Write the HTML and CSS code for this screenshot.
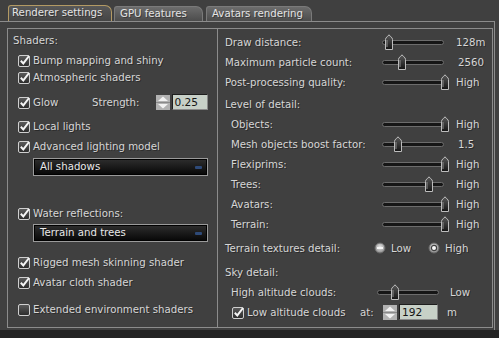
FILE: index.html
```html
<!DOCTYPE html>
<html lang="en">
<head>
    <meta charset="UTF-8">
    <title>Graphics preferences</title>
    <link rel="stylesheet" href="styles.css">
</head>
<body>
    <svg class="defs" width="0" height="0">
        <defs>
            <linearGradient id="thumbFill" x1="0" y1="0" x2="0" y2="1">
                <stop offset="0" stop-color="#5a5a5a"/>
                <stop offset="1" stop-color="#141414"/>
            </linearGradient>
            <linearGradient id="boxFill" x1="0" y1="0" x2="0" y2="1">
                <stop offset="0" stop-color="#5c5c5c"/>
                <stop offset="1" stop-color="#2a2a2a"/>
            </linearGradient>
            <radialGradient id="radioFill" cx="0.5" cy="0.4" r="0.6">
                <stop offset="0" stop-color="#e8e8e8"/>
                <stop offset="1" stop-color="#8a8a8a"/>
            </radialGradient>
            <symbol id="thumb" viewBox="0 0 10 16">
                <path d="M1.5 15.5 V5.5 Q1.5 3.6 3.4 2.6 L5 0.8 L6.6 2.6 Q8.5 3.6 8.5 5.5 V15.5 Z" fill="url(#thumbFill)" stroke="#bdbdbd"/>
                <path d="M3 13 V6" stroke="#8c8c8c" stroke-width="1"/>
            </symbol>
            <symbol id="cb-on" viewBox="0 0 13 13">
                <rect x="0.5" y="1.5" width="11" height="11" rx="1.5" fill="url(#boxFill)" stroke="#cfcfcf"/>
                <path d="M2.8 6.8 L5.3 9.4 L11 2" stroke="#f4f4f4" stroke-width="2" fill="none"/>
            </symbol>
            <symbol id="cb-off" viewBox="0 0 13 13">
                <rect x="0.5" y="1.5" width="11" height="11" rx="1.5" fill="url(#boxFill)" stroke="#cfcfcf"/>
            </symbol>
            <symbol id="spin" viewBox="0 0 14 15">
                <rect x="0" y="0" width="14" height="15" fill="#b2b2b2"/>
                <path d="M7 1.5 L12 6 H2 Z" fill="#f2f2f2"/>
                <path d="M7 13.5 L12 9 H2 Z" fill="#f2f2f2"/>
                <path d="M0 7.5 H14" stroke="#8a8a8a"/>
            </symbol>
            <symbol id="radio-off" viewBox="0 0 12 12">
                <circle cx="6" cy="6" r="5" fill="url(#radioFill)" stroke="#6a6a6a"/>
                <path d="M3 6 H9" stroke="#f6f6f6" stroke-width="2"/>
            </symbol>
            <symbol id="radio-on" viewBox="0 0 12 12">
                <circle cx="6" cy="6" r="5" fill="url(#radioFill)" stroke="#6a6a6a"/>
                <circle cx="6" cy="6" r="2.6" fill="#fafafa" stroke="#404040" stroke-width="1.2"/>
            </symbol>
        </defs>
    </svg>

    <div class="tabs">
        <div class="tab active">Renderer settings</div>
        <div class="tab tab-gpu">GPU features</div>
        <div class="tab">Avatars rendering</div>
    </div>

    <div class="panel">
        <div class="box">
            <div class="col-left">
                <div class="row head">Shaders:</div>
                <div class="row check mt4"><svg class="cb"><use href="#cb-on"/></svg>Bump mapping and shiny</div>
                <div class="row check mt1"><svg class="cb"><use href="#cb-on"/></svg>Atmospheric shaders</div>
                <div class="row check glow mt8">
                    <svg class="cb"><use href="#cb-on"/></svg>
                    <span class="glow-label">Glow</span>
                    <span>Strength:</span>
                    <svg class="spin"><use href="#spin"/></svg>
                    <span class="field field-glow">0.25</span>
                </div>
                <div class="row check mt7"><svg class="cb"><use href="#cb-on"/></svg>Local lights</div>
                <div class="row check mt4"><svg class="cb"><use href="#cb-on"/></svg>Advanced lighting model</div>
                <div class="combo mt4">All shadows<span class="combo-arrow"></span></div>
                <div class="row check mt29"><svg class="cb"><use href="#cb-on"/></svg>Water reflections:</div>
                <div class="combo mt3">Terrain and trees<span class="combo-arrow"></span></div>
                <div class="row check mt12"><svg class="cb"><use href="#cb-on"/></svg>Rigged mesh skinning shader</div>
                <div class="row check mt4"><svg class="cb"><use href="#cb-on"/></svg>Avatar cloth shader</div>
                <div class="row check mt11"><svg class="cb"><use href="#cb-off"/></svg>Extended environment shaders</div>
            </div>

            <div class="col-right">
                <div class="rrow">
                    <span class="rlabel">Draw distance:</span>
                    <div class="slider"><div class="track"></div><svg class="thumb" style="left:2px"><use href="#thumb"/></svg></div>
                    <span class="value">128m</span>
                </div>
                <div class="rrow">
                    <span class="rlabel">Maximum particle count:</span>
                    <div class="slider"><div class="track"></div><svg class="thumb" style="left:15px"><use href="#thumb"/></svg></div>
                    <span class="value num">2560</span>
                </div>
                <div class="rrow">
                    <span class="rlabel">Post-processing quality:</span>
                    <div class="slider"><div class="track"></div><svg class="thumb" style="left:58px"><use href="#thumb"/></svg></div>
                    <span class="value">High</span>
                </div>
                <div class="rrow mt2">
                    <span class="rlabel">Level of detail:</span>
                </div>
                <div class="rrow indent">
                    <span class="rlabel">Objects:</span>
                    <div class="slider"><div class="track"></div><svg class="thumb" style="left:58px"><use href="#thumb"/></svg></div>
                    <span class="value">High</span>
                </div>
                <div class="rrow indent">
                    <span class="rlabel">Mesh objects boost factor:</span>
                    <div class="slider"><div class="track"></div><svg class="thumb" style="left:11px"><use href="#thumb"/></svg></div>
                    <span class="value num">1.5</span>
                </div>
                <div class="rrow indent">
                    <span class="rlabel">Flexiprims:</span>
                    <div class="slider"><div class="track"></div><svg class="thumb" style="left:58px"><use href="#thumb"/></svg></div>
                    <span class="value">High</span>
                </div>
                <div class="rrow indent">
                    <span class="rlabel">Trees:</span>
                    <div class="slider"><div class="track"></div><svg class="thumb" style="left:42px"><use href="#thumb"/></svg></div>
                    <span class="value">High</span>
                </div>
                <div class="rrow indent">
                    <span class="rlabel">Avatars:</span>
                    <div class="slider"><div class="track"></div><svg class="thumb" style="left:58px"><use href="#thumb"/></svg></div>
                    <span class="value">High</span>
                </div>
                <div class="rrow indent">
                    <span class="rlabel">Terrain:</span>
                    <div class="slider"><div class="track"></div><svg class="thumb" style="left:58px"><use href="#thumb"/></svg></div>
                    <span class="value">High</span>
                </div>
                <div class="rrow mt4">
                    <span class="rlabel terrain-label">Terrain textures detail:</span>
                    <svg class="radio"><use href="#radio-off"/></svg><span class="radio-text">Low</span>
                    <svg class="radio"><use href="#radio-on"/></svg><span>High</span>
                </div>
                <div class="rrow mt4">
                    <span class="rlabel">Sky detail:</span>
                </div>
                <div class="rrow indent">
                    <span class="rlabel sky-label">High altitude clouds:</span>
                    <div class="slider"><div class="track"></div><svg class="thumb" style="left:13px"><use href="#thumb"/></svg></div>
                    <span class="value low">Low</span>
                </div>
                <div class="rrow clouds">
                    <svg class="cb"><use href="#cb-on"/></svg>
                    <span class="clouds-label">Low altitude clouds</span>
                    <span class="at">at:</span>
                    <svg class="spin"><use href="#spin"/></svg>
                    <span class="field field-clouds">192</span>
                    <span class="unit">m</span>
                </div>
            </div>
        </div>
    </div>
    <div class="footer"></div>
</body>
</html>
```

FILE: styles.css
```css
body {
    margin: 0;
    width: 499px;
    height: 338px;
    overflow: hidden;
    background: #404040;
    color: #d6d6d6;
    font-family: "DejaVu Sans", sans-serif;
    font-size: 10.2px;
    text-shadow: 1px 1px 0 rgba(0,0,0,0.35);
}

.defs {
    position: absolute;
    width: 0;
    height: 0;
}

/* tabs */

.tabs {
    height: 21px;
    padding-left: 8px;
    display: flex;
    align-items: flex-end;
    gap: 2px;
    box-sizing: border-box;
}

.tab {
    height: 14px;
    line-height: 14px;
    width: 99px;
    padding-left: 5px;
    background: linear-gradient(#6c6c6c, #4c4c4c);
    border: 1px solid #7a7a7a;
    border-bottom: none;
    border-radius: 3px 7px 0 0;
    color: #e4e4e4;
}

.tab.tab-gpu {
    width: 82px;
    margin-right: 1px;
}

.tab.active {
    height: 15px;
    width: 99px;
    padding-left: 3px;
    background: linear-gradient(#585858, #454545);
    border-color: #b39a64;
}

/* panel */

.panel {
    width: 495px;
    height: 309px;
    border-top: 1px solid #8c8c8c;
    border-right: 1px solid #8c8c8c;
    padding: 6px 0 0 7px;
    box-sizing: border-box;
}

.box {
    width: 486px;
    height: 300px;
    border: 1px solid #8c8c8c;
    box-sizing: border-box;
    display: flex;
}

.footer {
    height: 8px;
    background: #252525;
}

.col-left {
    width: 210px;
    border-right: 1px solid #8c8c8c;
    box-sizing: border-box;
    padding-top: 3px;
}

.col-right {
    flex: 1;
    padding: 3px 0 0 7px;
}

.row {
    height: 16px;
    display: flex;
    align-items: center;
    white-space: nowrap;
}

.head {
    padding-left: 5px;
}

.check {
    padding-left: 10px;
}

.cb {
    width: 13px;
    height: 13px;
    margin-right: 2px;
    flex: none;
}

.glow {
    height: 18px;
}

.glow-label {
    width: 59px;
}

.spin {
    width: 14px;
    height: 15px;
    flex: none;
}

.glow .spin {
    margin-left: 16px;
}

.field {
    height: 15px;
    line-height: 15px;
    background: #c7d0c7;
    border: 1px solid #1e1e1e;
    border-right-color: #8a8a8a;
    border-bottom-color: #8a8a8a;
    color: #151515;
    text-shadow: none;
    padding-left: 2px;
    box-sizing: border-box;
    font-size: 10.6px;
}

.field-glow {
    width: 36px;
    height: 16px;
    margin-left: 2px;
}

.combo {
    margin-left: 25px;
    width: 175px;
    height: 18px;
    line-height: 16px;
    box-sizing: border-box;
    border: 1px solid #9a9a9a;
    background: linear-gradient(#2e2e2e, #060606);
    padding-left: 6px;
    color: #e8e8e8;
    position: relative;
    box-shadow: inset 0 0 0 1px #000;
}

.combo-arrow {
    position: absolute;
    right: 5px;
    top: 7px;
    width: 7px;
    height: 3px;
    background: #2e4a78;
    border-radius: 1px;
}

/* right column */

.rrow {
    height: 20px;
    display: flex;
    align-items: center;
    white-space: nowrap;
}

.rlabel {
    width: 157px;
    flex: none;
}

.indent {
    padding-left: 6px;
}

.indent .rlabel {
    width: 151px;
}

.slider {
    position: relative;
    width: 66px;
    height: 16px;
    flex: none;
}

.track {
    position: absolute;
    left: 0;
    top: 6px;
    width: 62px;
    height: 5px;
    box-sizing: border-box;
    background: #161616;
    border: 1px solid #6c6c6c;
    border-radius: 3px;
}

.thumb {
    position: absolute;
    top: 0;
    width: 10px;
    height: 16px;
}

.value {
    margin-left: 8px;
}

.value.num {
    margin-left: 10px;
}

.indent .rlabel.sky-label {
    width: 146px;
}

.value.low {
    margin-left: 7px;
}

.terrain-label {
    width: 149px;
}

.radio {
    width: 12px;
    height: 12px;
    flex: none;
    margin-right: 5px;
}

.radio-text {
    width: 37px;
}

.clouds {
    padding-left: 7px;
}

.clouds .cb {
    margin-right: 2px;
}

.clouds-label {
    width: 113px;
}

.at {
    width: 23px;
}

.field-clouds {
    width: 39px;
    margin-left: 2px;
    height: 16px;
}

.unit {
    margin-left: 9px;
}

.mt1 { margin-top: 1px; }
.mt2 { margin-top: 2px; }
.mt3 { margin-top: 3px; }
.mt4 { margin-top: 4px; }
.mt7 { margin-top: 7px; }
.mt8 { margin-top: 8px; }
.mt11 { margin-top: 11px; }
.mt12 { margin-top: 12px; }
.mt29 { margin-top: 29px; }
```
